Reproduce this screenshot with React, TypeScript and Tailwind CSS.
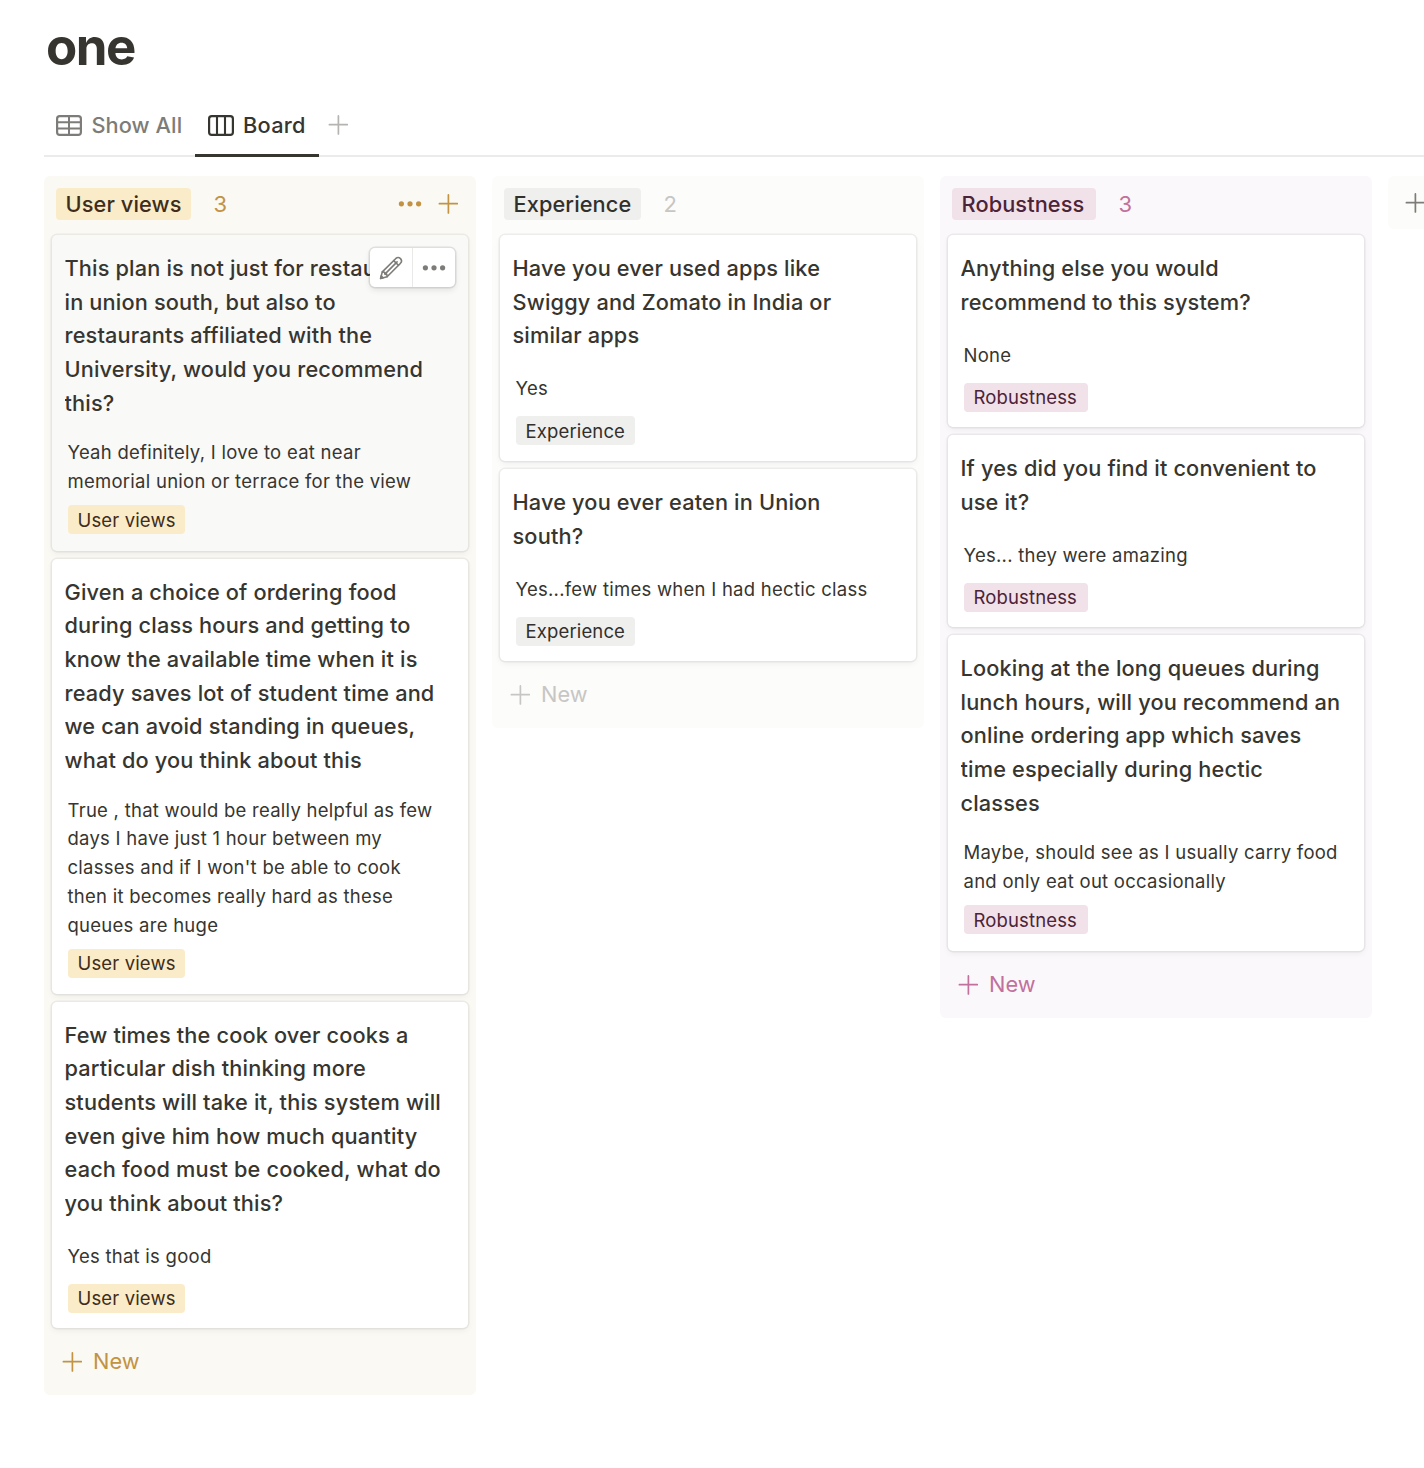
import React from "react";

type Tone = "yellow" | "gray" | "pink";

interface CardData {
  title: string[];
  answer: string[];
  hovered?: boolean;
  size: string;
}

interface ColumnData {
  name: string;
  count: number;
  tone: Tone;
  actions?: boolean;
  height: string;
  cards: CardData[];
}

const tones: Record<Tone, { column: string; tag: string; accent: string; headTag: string; cardTag: string }> = {
  yellow: {
    column: "bg-[#faf9f4]",
    tag: "bg-[#faecc9] text-[#402c1b]",
    accent: "text-[#c29343]",
    headTag: "w-[135px]",
    cardTag: "w-[117px]",
  },
  gray: {
    column: "bg-[#fcfcfa]",
    tag: "bg-[#efefee] text-[#32302c]",
    accent: "text-[#c7c6c4]",
    headTag: "w-[137px]",
    cardTag: "w-[119px]",
  },
  pink: {
    column: "bg-[#faf8fb]",
    tag: "bg-[#f1e1e9] text-[#4c2337]",
    accent: "text-[#c1719c]",
    headTag: "w-[144px]",
    cardTag: "w-[124px]",
  },
};

const columns: ColumnData[] = [
  {
    name: "User views",
    count: 3,
    tone: "yellow",
    actions: true,
    height: "h-[1218.5px]",
    cards: [
      {
        title: [
          "This plan is not just for restaurants",
          "in union south, but also to",
          "restaurants affiliated with the",
          "University, would you recommend",
          "this?",
        ],
        answer: ["Yeah definitely, I love to eat near", "memorial union or terrace for the view"],
        hovered: true,
        size: "h-[316px] pt-[17.1px]",
      },
      {
        title: [
          "Given a choice of ordering food",
          "during class hours and getting to",
          "know the available time when it is",
          "ready saves lot of student time and",
          "we can avoid standing in queues,",
          "what do you think about this",
        ],
        answer: [
          "True , that would be really helpful as few",
          "days I have just 1 hour between my",
          "classes and if I won't be able to cook",
          "then it becomes really hard as these",
          "queues are huge",
        ],
        size: "h-[435px] pt-[16.6px]",
      },
      {
        title: [
          "Few times the cook over cooks a",
          "particular dish thinking more",
          "students will take it, this system will",
          "even give him how much quantity",
          "each food must be cooked, what do",
          "you think about this?",
        ],
        answer: ["Yes that is good"],
        size: "h-[326px] pt-[16.6px]",
      },
    ],
  },
  {
    name: "Experience",
    count: 2,
    tone: "gray",
    height: "h-[551.5px]",
    cards: [
      {
        title: ["Have you ever used apps like", "Swiggy and Zomato in India or", "similar apps"],
        answer: ["Yes"],
        size: "h-[226px] pt-[17.1px]",
      },
      {
        title: ["Have you ever eaten in Union", "south?"],
        answer: ["Yes...few times when I had hectic class"],
        size: "h-[192px] pt-[17.1px]",
      },
    ],
  },
  {
    name: "Robustness",
    count: 3,
    tone: "pink",
    height: "h-[841.5px]",
    cards: [
      {
        title: ["Anything else you would", "recommend to this system?"],
        answer: ["None"],
        size: "h-[192px] pt-[17.1px]",
      },
      {
        title: ["If yes did you find it convenient to", "use it?"],
        answer: ["Yes... they were amazing"],
        size: "h-[192px] pt-[17.1px]",
      },
      {
        title: [
          "Looking at the long queues during",
          "lunch hours, will you recommend an",
          "online ordering app which saves",
          "time especially during hectic",
          "classes",
        ],
        answer: ["Maybe, should see as I usually carry food", "and only eat out occasionally"],
        size: "h-[316px] pt-[17.1px]",
      },
    ],
  },
];

function PlusIcon({ className = "" }: { className?: string }) {
  return (
    <svg viewBox="0 0 20 20" className={`size-5 shrink-0 ${className}`} fill="none" stroke="currentColor" strokeWidth="1.7" strokeLinecap="round">
      <path d="M10.4 .9v18M1.4 9.7h18" />
    </svg>
  );
}

function DotsIcon({ className = "" }: { className?: string }) {
  return (
    <svg viewBox="0 0 24 6" className={`h-1.5 w-6 shrink-0 ${className}`} fill="currentColor">
      <circle cx="3.4" cy="2.8" r="2.6" />
      <circle cx="12" cy="2.8" r="2.6" />
      <circle cx="20.6" cy="2.8" r="2.6" />
    </svg>
  );
}

function TableIcon() {
  return (
    <svg viewBox="0 0 26 21" className="mb-px h-[21px] w-[26px] shrink-0" fill="none" stroke="currentColor">
      <rect x="1.1" y="1.1" width="23.8" height="18.8" rx="2.6" strokeWidth="2.2" />
      <path d="M13 1v19M1 7.2h24M1 13.6h24" strokeWidth="2" />
    </svg>
  );
}

function BoardIcon() {
  return (
    <svg viewBox="0 0 26 21" className="mb-px h-[21px] w-[26px] shrink-0" fill="none" stroke="currentColor">
      <rect x="1.1" y="1.1" width="23.8" height="18.8" rx="2.6" strokeWidth="2.2" />
      <path d="M9 1v19M17 1v19" strokeWidth="2.1" />
    </svg>
  );
}

function PencilIcon() {
  return (
    <svg viewBox="0 0 24 24" className="size-6" fill="none" stroke="currentColor" strokeWidth="1.6" strokeLinejoin="round" strokeLinecap="round">
      <path d="M1.6 22.4 3.3 15.9 16.6 2.7Q19.1.4 21.5 2.6 23.7 5 21.3 7.5L8.1 20.7Z" />
      <path d="M3.3 15.9 5.6 16.3 5.9 18.1 7.8 18.4 8.1 20.7M5.9 18.1 18.1 5.9M14.7 4.6 19.4 9.3" />
      <path d="M1.6 22.4 2.2 19.9 4.1 21.8Z" fill="currentColor" />
    </svg>
  );
}

function Card({ card, tag, tone }: { card: CardData; tag: string; tone: Tone }) {
  const t = tones[tone];
  return (
    <article
      className={`relative flex shrink-0 flex-col rounded-[5px] px-[12.5px] shadow-[0_0_0_1.5px_rgba(15,15,15,0.06),0_3px_6px_rgba(15,15,15,0.05)] ${card.size} ${card.hovered ? "bg-[#f9f9f8]" : "bg-white"}`}
    >
      <h3 className="overflow-hidden text-[21.75px] leading-[33.65px] font-medium tracking-[0.15px] whitespace-nowrap">
        {card.title.map((line) => (
          <span key={line} className="block">
            {line}
          </span>
        ))}
      </h3>
      <div className="flex min-h-[63.6px] items-center pt-[18px] pb-[10px] pl-[3px] text-[18.5px] leading-[28.8px] tracking-[0.26px] whitespace-nowrap">
        <p>
          {card.answer.map((line) => (
            <span key={line} className="block">
              {line}
            </span>
          ))}
        </p>
      </div>
      <span
        className={`-mt-[0.5px] ml-[3.5px] flex h-[29px] items-center rounded-[4px] pt-[1.5px] pl-[9.5px] text-[18.5px] tracking-[0.14px] ${t.cardTag} ${t.tag}`}
      >
        {tag}
      </span>
      {card.hovered && (
        <div className="absolute top-[13px] right-[13px] flex h-[39px] w-[85px] rounded-[5px] bg-white text-[#7d7c78] shadow-[0_0_0_1.5px_rgba(15,15,15,0.1),0_3px_6px_rgba(15,15,15,0.1)]">
          <button className="flex w-[42px] items-center justify-center">
            <PencilIcon />
          </button>
          <button className="flex flex-1 items-center justify-center border-l-[1.5px] border-[#e9e9e7]">
            <DotsIcon />
          </button>
        </div>
      )}
    </article>
  );
}

function Column({ column }: { column: ColumnData }) {
  const t = tones[column.tone];
  return (
    <section className={`flex w-[432px] shrink-0 flex-col rounded-[6px] px-2 ${t.column} ${column.height}`}>
      <header className="flex h-[59px] shrink-0 items-start pt-3 pl-1 text-[21.75px]">
        <span className={`flex h-8 items-center rounded-[4px] pl-[9.5px] font-medium tracking-[0.1px] ${t.headTag} ${t.tag}`}>
          {column.name}
        </span>
        <span className={`ml-[22.5px] text-[22px] leading-8 ${t.accent}`}>{column.count}</span>
        {column.actions && (
          <div className={`mr-[10px] ml-auto flex h-[31px] items-center gap-4 ${t.accent}`}>
            <DotsIcon />
            <PlusIcon />
          </div>
        )}
      </header>
      <div className="flex flex-col gap-2">
        {column.cards.map((card) => (
          <Card key={card.title[0]} card={card} tag={column.name} tone={column.tone} />
        ))}
      </div>
      <button className={`mt-4 ml-2.5 flex h-[34px] items-center gap-[11px] text-[21.75px] ${t.accent}`}>
        <PlusIcon className="mt-px" />
        New
      </button>
    </section>
  );
}

export default function App() {
  return (
    <main className="h-[1468px] w-full overflow-hidden bg-white pl-11 font-['Inter',sans-serif] text-[#37352f]">
      <h1 className="ml-[2px] pt-[17px] text-[51px] leading-[60px] font-bold tracking-[-1.5px]">one</h1>
      <nav className="mt-[17px] flex h-[63px] border-b-2 border-[#ebebea] text-[21.75px] font-medium">
        <button className="flex h-[63px] w-[151px] items-center gap-[9.5px] pl-3 tracking-[0.07px] text-[#7d7c78]">
          <TableIcon />
          <span className="whitespace-nowrap">Show All</span>
        </button>
        <button className="flex h-[63px] w-[124px] items-center gap-[9px] border-b-[3px] border-[#37352f] pt-[3px] pl-[13px] tracking-[0.25px]">
          <BoardIcon />
          Board
        </button>
        <button className="flex h-[62px] items-center pl-[8.5px] text-[#b5b4b1]">
          <PlusIcon />
        </button>
      </nav>
      <div className="mt-[19px] flex items-start gap-4">
        {columns.map((column) => (
          <Column key={column.name} column={column} />
        ))}
        <button className="flex h-[53px] w-[54px] shrink-0 items-center rounded-[6px] bg-[#fcfcfa] pl-[17px] text-[#7d7c78]">
          <PlusIcon />
        </button>
      </div>
    </main>
  );
}
